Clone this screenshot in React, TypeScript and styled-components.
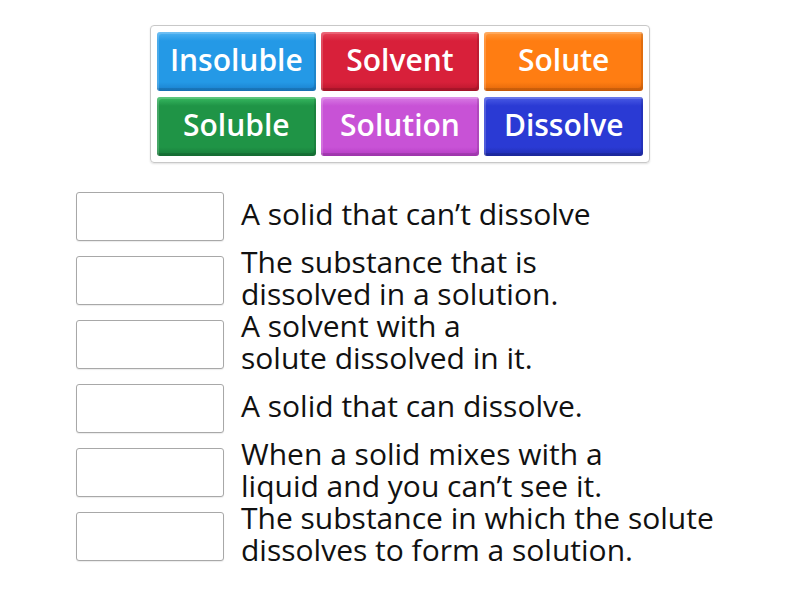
import React from "react";
import styled, { createGlobalStyle } from "styled-components";

interface TileProps {
  label: string;
  color: string;
  light: string;
  dark: string;
}

const tiles: TileProps[] = [
  { label: "Insoluble", color: "#2499e6", light: "#4fb2f2", dark: "#1a7fcc" },
  { label: "Solvent", color: "#d8203a", light: "#e8475c", dark: "#b8162c" },
  { label: "Solute", color: "#ff7d12", light: "#ff9a3e", dark: "#e0660a" },
  { label: "Soluble", color: "#1f9446", light: "#38bb62", dark: "#177a39" },
  { label: "Solution", color: "#c852d6", light: "#d97ce4", dark: "#b43cc4" },
  { label: "Dissolve", color: "#2a3ad4", light: "#4b5ce6", dark: "#1f2cb0" },
];

const definitions: string[][] = [
  ["A solid that can\u2019t dissolve"],
  ["The substance that is", "dissolved in a solution."],
  ["A solvent with a", "solute dissolved in it."],
  ["A solid that can dissolve."],
  ["When a solid mixes with a", "liquid and you can\u2019t see it."],
  ["The substance in which the solute", "dissolves to form a solution."],
];

const App = () => {
  return (
    <Page>
      <GlobalStyle />
      <Pool>
        {tiles.map((t) => (
          <Tile key={t.label} $color={t.color} $light={t.light} $dark={t.dark}>
            {t.label}
          </Tile>
        ))}
      </Pool>
      <List>
        {definitions.map((lines, i) => (
          <Row key={i}>
            <DropBox />
            <Definition>
              {lines.map((l, j) => (
                <span key={j}>{l}</span>
              ))}
            </Definition>
          </Row>
        ))}
      </List>
    </Page>
  );
};

const GlobalStyle = createGlobalStyle`
  body {
    margin: 0;
    background: #ffffff;
    font-family: "Open Sans", "Noto Sans", sans-serif;
  }
`;

const Page = styled.div`
  width: 800px;
  height: 600px;
  padding-top: 25px;
  box-sizing: border-box;
  overflow: hidden;
`;

const Pool = styled.div`
  width: 500px;
  box-sizing: border-box;
  margin: 0 auto;
  padding: 6px;
  border: 1px solid #c8c8c8;
  border-radius: 4px;
  box-shadow: 0 1px 2px rgba(0, 0, 0, 0.12);
  display: grid;
  grid-template-columns: repeat(3, 1fr);
  grid-auto-rows: 59px;
  column-gap: 5px;
  row-gap: 6px;
`;

const Tile = styled.div<{ $color: string; $light: string; $dark: string }>`
  display: flex;
  align-items: center;
  justify-content: center;
  border-radius: 3px;
  background: linear-gradient(${(p) => p.$light} 0%, ${(p) => p.$color} 15%, ${(p) => p.$color} 85%, ${(p) => p.$dark} 100%);
  box-shadow: inset 2px 2px 0 rgba(255, 255, 255, 0.18), inset -2px -3px 0 rgba(0, 0, 0, 0.12);
  color: #ffffff;
  font-size: 30px;
  font-weight: 600;
  padding-bottom: 4px;
  box-sizing: border-box;
`;

const List = styled.div`
  margin: 21px 0 0 76px;
  display: flex;
  flex-direction: column;
`;

const Row = styled.div`
  display: flex;
  align-items: center;
  height: 64px;
  gap: 17px;
`;

const DropBox = styled.div`
  width: 148px;
  height: 49px;
  box-sizing: border-box;
  border: 1px solid #a8a8a8;
  border-radius: 3px;
  background: #ffffff;
  box-shadow: 0 1px 1px rgba(0, 0, 0, 0.08);
  flex-shrink: 0;
`;

const Definition = styled.div`
  display: flex;
  flex-direction: column;
  font-size: 30px;
  line-height: 32px;
  padding-bottom: 4px;
  color: #111111;
  white-space: nowrap;
`;

export default App;
